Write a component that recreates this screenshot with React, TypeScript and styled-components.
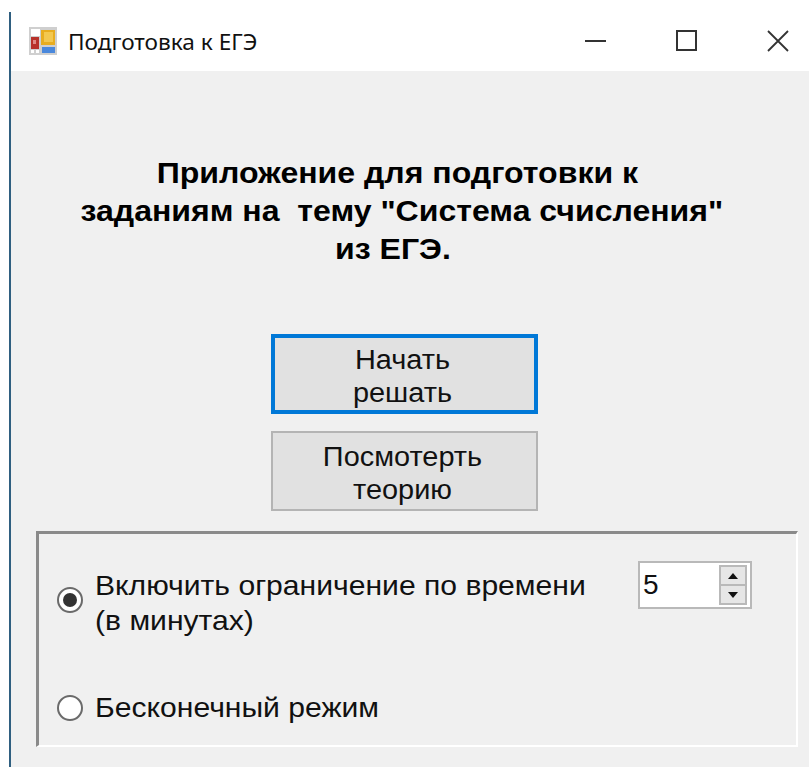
// App.tsx - exam prep start window
import React from 'react';
import styled, { createGlobalStyle } from 'styled-components';

const GlobalStyle = createGlobalStyle`
  html, body {
    margin: 0;
    padding: 0;
    background: #fff;
  }
  * {
    box-sizing: border-box;
  }
`;

const Desktop = styled.div`
  width: 809px;
  height: 767px;
  display: grid;
  grid-template-columns: 9px 2px 1fr;
  background: #fff;
  overflow: hidden;
`;

const WindowEdge = styled.div`
  grid-column: 2;
  margin-top: 12px;
  background: #2f5f80;
`;

const WindowColumn = styled.div`
  grid-column: 3;
  display: flex;
  flex-direction: column;
  min-width: 0;
`;

const TitleBar = styled.header`
  height: 71px;
  flex: none;
  display: flex;
  align-items: center;
  gap: 69px;
  padding: 11px 20px 0 18px;
  background: #fff;
`;

const TitleGroup = styled.div`
  flex: 1;
  display: flex;
  align-items: center;
  gap: 11px;
`;

const TitleText = styled.span`
  font: 400 22.6px 'Noto Sans', sans-serif;
  color: #111;
`;

const CaptionIcon = styled.svg`
  width: 22px;
  height: 22px;
  flex: none;
  stroke: #333;
  fill: none;
`;

const Body = styled.main`
  flex: 1;
  display: flex;
  flex-direction: column;
  align-items: center;
  background: #f0f0f0;
  padding: 83px 11px 0 25px;
`;

// The form's font runs wide, hence the horizontal scale on the text blocks
const Heading = styled.h1`
  margin: 0 0 0 -30px;
  font: 700 29px/38px 'Liberation Sans', Arial, sans-serif;
  color: #000;
  text-align: center;
  white-space: pre;
  transform: scaleX(1.105);
`;

const ActionButton = styled.button<{ $focused?: boolean }>`
  width: 267px;
  height: 80px;
  flex: none;
  padding: 5px 4px 0 0;
  margin-left: -26px;
  background: #e1e1e1;
  border: ${p => (p.$focused ? '4px solid #0078d7' : '2px solid #b4b4b4')};
  font: 400 27px/33px 'Liberation Sans', Arial, sans-serif;
  color: #111;
`;

const ButtonLabel = styled.span`
  display: block;
  transform: scaleX(1.07);
`;

const ButtonStack = styled.div`
  display: flex;
  flex-direction: column;
  gap: 17px;
  margin-top: 66px;
`;

const OptionsPanel = styled.section`
  align-self: stretch;
  height: 216px;
  margin-top: 20px;
  padding: 27px 44px 0 18px;
  border-style: solid;
  border-width: 3px 2px 2px 3px;
  border-color: #8a8a8a #fff #fff #8a8a8a;
  display: flex;
  flex-direction: column;
`;

const TimedRow = styled.div`
  display: flex;
  align-items: flex-start;
`;

const InfiniteRow = styled.div`
  display: flex;
  align-items: center;
  margin-top: 52px;
`;

const RadioMark = styled.span<{ $checked?: boolean }>`
  width: 26px;
  height: 26px;
  flex: none;
  border-radius: 50%;
  border: 2px solid #6a6a6a;
  background: #fff;
  display: flex;
  align-items: center;
  justify-content: center;
  margin-top: ${p => (p.$checked ? '26px' : '0')};

  &::after {
    content: '';
    display: ${p => (p.$checked ? 'block' : 'none')};
    width: 14px;
    height: 14px;
    border-radius: 50%;
    background: #333;
  }
`;

const OptionLabel = styled.div`
  margin-left: 12px;
  font: 400 28px/35px 'Liberation Sans', Arial, sans-serif;
  color: #111;
  white-space: pre;
  transform: scaleX(1.075);
  transform-origin: left center;
`;

const TimedLabel = styled(OptionLabel)`
  margin-top: 7px;
`;

const Spinner = styled.div`
  width: 114px;
  height: 48px;
  margin-left: auto;
  background: #fff;
  border: 2px solid #b9b9b9;
  display: flex;
  align-items: center;
  justify-content: space-between;
  padding: 0 3px 0 3px;
`;

const SpinnerValue = styled.span`
  font: 400 28px 'Liberation Sans', Arial, sans-serif;
  color: #111;
`;

const SpinnerArrows = styled.div`
  width: 28px;
  height: 40px;
  display: flex;
  flex-direction: column;
  gap: 2px;
  background: #b9b9b9;
  padding: 2px;
`;

const ArrowButton = styled.div`
  flex: 1;
  background: #e6e6e6;
  display: flex;
  align-items: center;
  justify-content: center;
`;

const Arrow = styled.span<{ $down?: boolean }>`
  width: 0;
  height: 0;
  border-left: 5px solid transparent;
  border-right: 5px solid transparent;
  ${p => (p.$down ? 'border-top: 6px solid #111;' : 'border-bottom: 6px solid #111;')}
`;

const AppIcon = () => (
  <svg width="28" height="28" viewBox="0 0 28 28" style={{ flex: 'none' }}>
    <rect width="28" height="28" fill="#cfcfcf" />
    <rect x="2" y="2" width="9" height="7" fill="#fff" />
    <rect x="2" y="10" width="8" height="12" fill="#b8322a" />
    <rect x="4" y="13" width="3" height="4" fill="#e08a84" />
    <rect x="12" y="3" width="14" height="15" fill="#e8ad20" />
    <rect x="15" y="5" width="9" height="10" fill="#f3c850" />
    <rect x="13" y="20" width="13" height="6" fill="#4a88dc" />
    <rect x="2" y="23" width="3" height="3" fill="#fff" />
    <rect x="7" y="23" width="3" height="3" fill="#fff" />
  </svg>
);

const App: React.FC = () => {
  return (
    <Desktop>
      <GlobalStyle />
      <WindowEdge />
      <WindowColumn>
        <TitleBar>
          <TitleGroup>
            <AppIcon />
            <TitleText>Подготовка к ЕГЭ</TitleText>
          </TitleGroup>
          <CaptionIcon viewBox="0 0 22 22">
            <path d="M0 11h21" strokeWidth="2" />
          </CaptionIcon>
          <CaptionIcon viewBox="0 0 22 22">
            <rect x="1" y="1" width="19" height="19" strokeWidth="2" />
          </CaptionIcon>
          <CaptionIcon viewBox="0 0 22 22">
            <path d="M1 1l20 20M21 1L1 21" strokeWidth="1.8" />
          </CaptionIcon>
        </TitleBar>
        <Body>
          <Heading>
            {'Приложение для подготовки к \nзаданиям на  тему "Система счисления"\nиз ЕГЭ.  '}
          </Heading>
          <ButtonStack>
            <ActionButton $focused>
              <ButtonLabel>
                Начать
                <br />
                решать
              </ButtonLabel>
            </ActionButton>
            <ActionButton>
              <ButtonLabel>
                Посмотерть
                <br />
                теорию
              </ButtonLabel>
            </ActionButton>
          </ButtonStack>
          <OptionsPanel>
            <TimedRow>
              <RadioMark $checked />
              <TimedLabel>{'Включить ограничение по времени\n(в минутах)'}</TimedLabel>
              <Spinner>
                <SpinnerValue>5</SpinnerValue>
                <SpinnerArrows>
                  <ArrowButton>
                    <Arrow />
                  </ArrowButton>
                  <ArrowButton>
                    <Arrow $down />
                  </ArrowButton>
                </SpinnerArrows>
              </Spinner>
            </TimedRow>
            <InfiniteRow>
              <RadioMark />
              <OptionLabel>Бесконечный режим</OptionLabel>
            </InfiniteRow>
          </OptionsPanel>
        </Body>
      </WindowColumn>
    </Desktop>
  );
};

export default App;
